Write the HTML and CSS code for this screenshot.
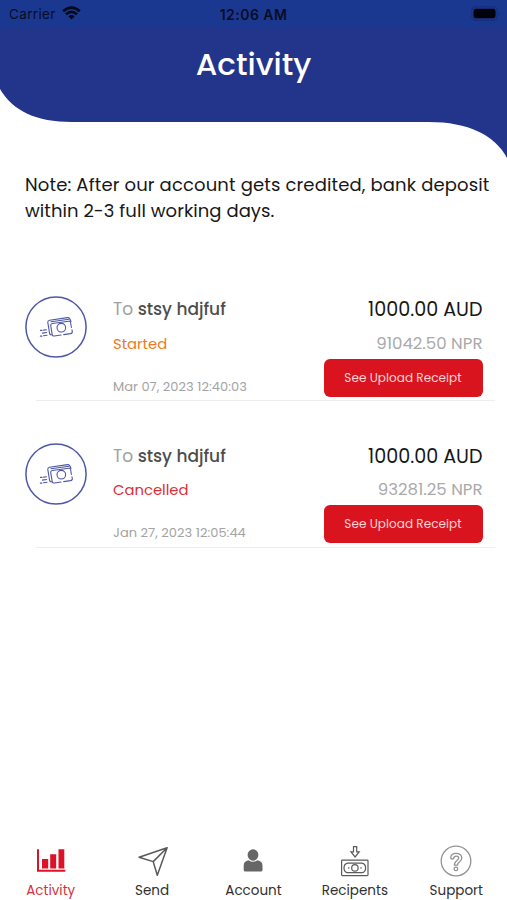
FILE: index.html
```html
<!DOCTYPE html>
<html lang="en">
<head>
<meta charset="utf-8">
<title>Activity</title>
<link rel="stylesheet" href="styles.css">
</head>
<body>
<svg class="defs" width="0" height="0" aria-hidden="true">
  <symbol id="cash" viewBox="0 0 62 62">
    <circle cx="31" cy="31" r="30.1" stroke-width="1.5"/>
    <path d="M46 25.5 44.8 22.8Q44.2 21.4 42.6 21.6L24.5 24.2Q22.6 24.6 22.8 26.4L24.6 37.5Q25 39 26.6 38.8"/>
    <path d="M46.4 31.5 45.6 26.5Q45.3 25 43.7 25.2L27.2 27.5Q25.5 27.9 25.7 29.5L27.2 38.6Q27.6 40.3 29.3 40L36 39M38.7 38.6 45.4 37.6Q47.6 37.2 47.3 35.5L47 33.8M26 25.8 44 23.3"/>
    <circle cx="36.3" cy="31.7" r="4.3"/>
    <path d="M15.5 34.4h1.6M18.6 34.1 21.4 33.8M17.4 37.1 21.6 36.5M15.3 40.1h1.6M18.5 39.7 22 39.2"/>
  </symbol>
</svg>
<div class="screen">
  <header class="header">
    <div class="status">
      <span class="carrier"><span class="carrier-name">Carrier</span>
        <svg width="19" height="14" viewBox="0 0 19 14"><g fill="none" stroke="#05091c" stroke-width="2.7"><path d="M1.2 5.2Q9.5-2 17.8 5.2"/><path d="M4 8.2Q9.5 3.4 15 8.2"/></g><path d="M9.5 13.6 6.3 10.3Q9.5 7.8 12.7 10.3Z" fill="#05091c"/></svg>
      </span>
      <span class="time">12:06 AM</span>
      <svg class="battery" width="30" height="15" viewBox="0 0 30 15"><rect x=".8" y=".8" width="25.4" height="13.4" rx="4" fill="none" stroke="#172d78" stroke-width="1.2"/><rect x="2.5" y="2.7" width="22" height="9.6" rx="2.2" fill="#02030a"/><path d="M27.6 5.2Q30 7.5 27.6 9.8Z" fill="#172d78"/></svg>
    </div>
    <h1 class="title">Activity</h1>
    <svg class="wave" viewBox="0 0 507 72" width="507" height="72"><path d="M0 0H507V72C495 49 468 36 429 36H72C36 36 13 25 0 3Z" fill="#22358b"/></svg>
  </header>
  <main class="main">
    <p class="note"><span class="n1">Note: After our account gets credited, bank deposit</span><br><span class="n2">within 2-3 full working days.</span></p>
    <section class="item">
      <svg class="cash"><use href="#cash"/></svg>
      <div class="who">
        <div class="name"><span class="to">To</span> <span class="person">stsy hdjfuf</span></div>
        <div class="state started">Started</div>
        <div class="date">Mar 07, 2023 12:40:03</div>
      </div>
      <div class="sums">
        <div class="aud">1000.00 AUD</div>
        <div class="npr">91042.50 NPR</div>
        <button class="receipt">See Upload Receipt</button>
      </div>
    </section>
    <section class="item">
      <svg class="cash"><use href="#cash"/></svg>
      <div class="who">
        <div class="name"><span class="to">To</span> <span class="person">stsy hdjfuf</span></div>
        <div class="state cancelled">Cancelled</div>
        <div class="date">Jan 27, 2023 12:05:44</div>
      </div>
      <div class="sums">
        <div class="aud">1000.00 AUD</div>
        <div class="npr">93281.25 NPR</div>
        <button class="receipt">See Upload Receipt</button>
      </div>
    </section>
  </main>
  <nav class="tabs">
    <a class="tab active"><svg width="34" height="34" viewBox="0 0 34 34"><path d="M4 5.3V26.8H31.3" fill="none" stroke="#dc1327" stroke-width="2"/><path d="M8 15.1h6.2V24.6H8zM16.2 10.3h6V24.6h-6zM24.5 5.2h5.8V24.6h-5.8z" fill="#dc1327"/></svg><span>Activity</span></a>
    <a class="tab"><svg width="34" height="34" viewBox="0 0 34 34"><path d="M32.1 3.8 4.1 13.2 18.2 17.6 22.3 31.2ZM32.1 3.8 18.2 17.6" fill="none" stroke="#585858" stroke-width="1.5" stroke-linejoin="round"/></svg><span>Send</span></a>
    <a class="tab"><svg width="34" height="34" viewBox="0 0 34 34"><ellipse cx="17" cy="11" rx="5.4" ry="5.7" fill="#666"/><path d="M7.7 26V21.5Q7.7 17 12.6 16.2Q17 19.2 21.4 16.2Q26.5 17 26.5 21.5V26Q26.5 27.6 24.9 27.6H9.3Q7.7 27.6 7.7 26Z" fill="#666"/></svg><span>Account</span></a>
    <a class="tab"><svg width="34" height="34" viewBox="0 0 34 34" fill="none" stroke="#5b5b5b" stroke-width="1.2"><path d="M15.5 2.7h3.2v5.2h2.5L17.1 13 13 7.9h2.5Z"/><rect x="3.6" y="16.2" width="26.4" height="15.4" rx=".8"/><path d="M9.5 19.1H24.1Q27.6 20 27.6 23.9Q27.6 27.8 24.1 28.7H9.5Q6 27.8 6 23.9Q6 20 9.5 19.1Z"/><circle cx="16.9" cy="23.9" r="3.2"/><path d="M10 23.9h1.4M22.3 23.9h1.4"/></svg><span>Recipents</span></a>
    <a class="tab"><svg width="34" height="34" viewBox="0 0 34 34" fill="none" stroke="#929292" stroke-width="1.3"><circle cx="17" cy="17" r="14.8"/><path d="M11.8 14.3C11 7.7 22.8 7.8 22.8 14.1C22.8 18 18.6 17.6 18.4 21.2H15.4C15.1 16.3 19.6 16.8 19.7 14.1C19.8 11.4 14.9 11.4 14.8 14.3Q13.3 15.9 11.8 14.3Z"/><circle cx="16.9" cy="24.9" r="1.8"/></svg><span>Support</span></a>
  </nav>
</div>
</body>
</html>
```
FILE: styles.css
```css
* { box-sizing: border-box; }
body { margin: 0; background: #fff; font-family: Poppins, Inter, "Liberation Sans", sans-serif; color: #171717; }
.defs { display: block; height: 0; }
.screen { width: 507px; height: 900px; display: flex; flex-direction: column; overflow: hidden; }
.header { height: 158px; flex: none; display: flex; flex-direction: column; }
.status { height: 27px; flex: none; background: #1b3890; display: grid; grid-template-columns: 1fr auto 1fr; align-items: center; padding: 0 6px 0 9px; color: #080d24; font: 13.5px/27px Inter, sans-serif; }
.carrier { display: flex; align-items: center; gap: 6px; }
.carrier-name { letter-spacing: .35px; padding-top: 1px; }
.carrier svg { margin-top: -2px; }
.time { font-weight: 600; font-size: 14px; letter-spacing: .45px; margin-right: 3px; }
.battery { justify-self: end; margin-top: -1px; }
.title { margin: 0; height: 59px; flex: none; background: #22358b; color: #fff; text-align: center; font-size: 31px; font-weight: 500; line-height: 75px; }
.wave { display: block; flex: none; }
.main { flex: 1; }
.note { margin: 14px 0 0 25px; font-size: 18px; line-height: 26px; white-space: nowrap; }
.n1 { letter-spacing: .14px; }
.n2 { letter-spacing: .06px; }
.item { display: flex; height: 106px; margin: 0 12px 40.5px 36px; border-bottom: 1px solid #eee; }
.note + .item { margin-top: 71px; }
.cash { width: 62px; height: 62px; flex: none; margin: 1px 0 0 -11px; fill: none; stroke: #4e57a5; stroke-width: 1.1; stroke-linecap: round; }
.who { width: 180px; margin-left: 26px; white-space: nowrap; }
.name { height: 29px; line-height: 29px; font-size: 17px; }
.to { color: #a1a1a1; }
.person { color: #4d4d4d; font-weight: 500; }
.state { margin-top: 5.6px; height: 28px; line-height: 28px; font-size: 14.8px; }
.started { color: #ea7a22; }
.cancelled { color: #d92e38; }
.date { margin-top: 17px; height: 24px; line-height: 24px; font-size: 13px; letter-spacing: .03px; color: #a3a3a3; }
.sums { flex: 1; display: flex; flex-direction: column; align-items: flex-end; margin-right: 12.5px; white-space: nowrap; }
.aud { height: 29px; line-height: 29px; font-size: 19.1px; }
.npr { margin-top: 5.6px; height: 28px; line-height: 28px; font-size: 16.6px; color: #aaa; }
.receipt { margin: 1.4px 0 0; width: 159px; height: 38px; flex: none; padding: 0; border: 0; border-radius: 6px; background: #d9141e; color: #fbd5d7; font: 12px Poppins, Inter, sans-serif; letter-spacing: .06px; }
.tabs { height: 56px; flex: none; display: grid; grid-template-columns: repeat(5, 1fr); }
.tab { display: flex; flex-direction: column; align-items: center; font-size: 13.5px; line-height: 22px; color: #303030; }
.tab span { margin-top: 2px; }
.tab svg { flex: none; }
.active { color: #d5323d; }
```
